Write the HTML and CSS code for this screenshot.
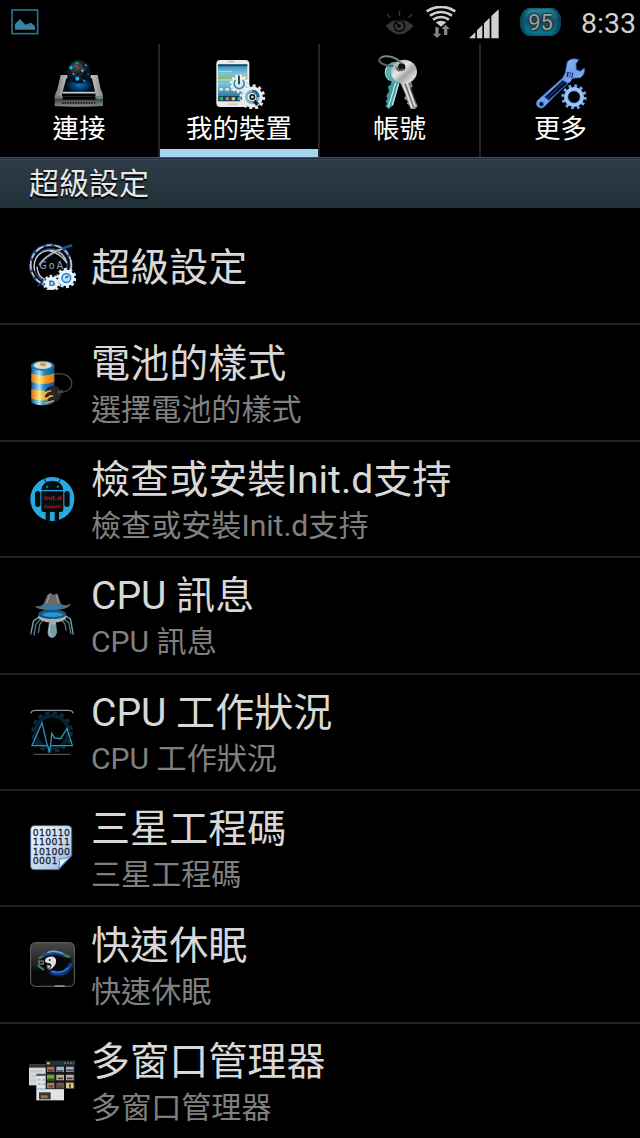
FILE: index.html
```
<!DOCTYPE html>
<html lang="zh-Hant">
<head>
  <meta charset="UTF-8" />
  <title>設定</title>
  <meta name="viewport" content="width=device-width, initial-scale=1" />
  <link rel="stylesheet" href="styles.css">
</head>
<body>
  <div class="statusbar">
    <svg class="s-pic" viewBox="0 0 84 78">
      <rect x="3" y="3" width="77" height="71" fill="none" stroke="#2b6f8a" stroke-width="5"/>
      <path d="M12 62V45L27 30L43 47L60 41L72 52V62Z" fill="#3a83a3"/>
    </svg>
    <div class="status-right">
      <svg class="s-eye" viewBox="0 0 86 72">
        <path d="M1 44Q43 8 85 44Q43 96 1 44Z" fill="#373737"/>
        <circle cx="43" cy="45" r="18" fill="#000"/><circle cx="43" cy="45" r="14" fill="#373737"/>
        <circle cx="42" cy="45" r="5" fill="#000"/><path d="M32 35L42 45" stroke="#000" stroke-width="4"/>
        <path d="M5 9L16 20M43 0V15M81 9L70 20" stroke="#373737" stroke-width="4"/>
      </svg>
      <svg class="s-wifi" viewBox="0 0 90 96">
        <g fill="none" stroke="#d0d0d0" stroke-width="8">
          <path d="M2 16Q45 -11 88 16"/><path d="M12 29Q45 7 78 29"/><path d="M21 41Q45 25 69 41"/>
        </g>
        <path d="M29 49Q45 40 61 49L45 62Z" fill="#d0d0d0"/>
        <path d="M28 64H38V83H46L33 96L20 83H28ZM54 87H64V69H72L59 56L46 69H54Z" fill="#858585"/>
      </svg>
      <svg class="s-signal" viewBox="0 0 90 90">
        <path d="M0 88L19 70V88ZM24 88V64L40 48V88ZM45 88V43L62 26V88ZM67 88V21L89 1V88Z" fill="#d0d0d0"/>
      </svg>
      <div class="battery">95</div>
      <div class="clock">8:33</div>
    </div>
  </div>

  <div class="tabs">
    <div class="tab">
      <svg viewBox="0 0 162 162">
        <defs>
          <radialGradient id="ball" cx=".4" cy=".3"><stop offset="0" stop-color="#555"/><stop offset=".65" stop-color="#161b20"/><stop offset="1" stop-color="#07141f"/></radialGradient>
          <radialGradient id="glow"><stop offset="0" stop-color="#0675cc"/><stop offset="1" stop-color="#001329"/></radialGradient>
          <linearGradient id="rail" x2="1"><stop offset="0" stop-color="#777"/><stop offset=".5" stop-color="#fff"/><stop offset="1" stop-color="#888"/></linearGradient>
          <linearGradient id="tray" x2="0" y2="1"><stop offset="0" stop-color="#999"/><stop offset=".3" stop-color="#414549"/><stop offset="1" stop-color="#8b8d8f"/></linearGradient>
        </defs>
        <path d="M45 62H118L130 112H32Z" fill="#05080c"/>
        <ellipse cx="82" cy="90" rx="38" ry="22" fill="url(#glow)"/>
        <path d="M26 60H46V70H43L32 110L29 124H8Q9 117 16 103ZM137 60H116V70H120L129 110L131 124H153Q153 115 146 103Z" fill="url(#rail)"/>
        <path d="M32 110H129V116H32Z" fill="#c5c5c5"/>
        <path d="M32 116H129V124H32Z" fill="#000"/>
        <path d="M8 124H153V153Q80 158 8 153Z" fill="url(#tray)"/>
        <path d="M32 124H130V134H32Z" fill="#030303"/>
        <path d="M30 144H130" stroke="#121212" stroke-width="5" stroke-dasharray="5 3"/>
        <circle cx="81" cy="50" r="35" fill="url(#ball)"/>
        <path d="M55 40L82 23L97 46L75 70ZM65 30L97 46L108 30M64 57L97 77" fill="none" stroke="#737b80" stroke-width="1.5" opacity=".7"/>
        <g fill="#11bff0"><circle cx="74" cy="24" r="3"/><circle cx="57" cy="38" r="5"/><circle cx="91" cy="47" r="4"/><circle cx="101" cy="31" r="3"/><circle cx="76" cy="71" r="6"/><circle cx="64" cy="57" r="3"/><circle cx="97" cy="77" r="3"/><circle cx="108" cy="57" r="2"/><circle cx="142" cy="130" r="3"/></g>
      </svg>
      <span>連接</span>
    </div>
    <div class="tab active">
      <svg viewBox="0 0 162 162">
        <defs><linearGradient id="screen" x2="0" y2="1"><stop offset="0" stop-color="#298dbb"/><stop offset=".25" stop-color="#7ac4dc"/><stop offset=".4" stop-color="#8bb76b"/><stop offset=".52" stop-color="#76c7e7"/><stop offset="1" stop-color="#155b85"/></linearGradient></defs>
        <rect x="13" y="15" width="99" height="141" rx="12" fill="#eeeae7"/>
        <rect x="18" y="28" width="88" height="111" fill="url(#screen)"/>
        <path d="M18 28H106V34H18Z" fill="#24485c"/>
        <path d="M49 20H68" stroke="#aaa" stroke-width="3"/><rect x="48" y="145" width="29" height="6" rx="3" fill="#cfcfcf"/>
        <path d="M20 75H64M20 49H60" stroke="#a8d9c5" stroke-width="4"/>
        <path d="M22 103H97" stroke="#faebbd" stroke-width="7" stroke-dasharray="11 7"/>
        <path d="M20 123H104V137H20Z" fill="#123f62"/><path d="M23 131H33" stroke="#45b344" stroke-width="9"/><path d="M41 131H51" stroke="#ed702c" stroke-width="9"/><path d="M59 131H69" stroke="#f0cb36" stroke-width="9"/><path d="M77 131H88" stroke="#51b8d9" stroke-width="9"/>
        <circle cx="98" cy="59" r="4" fill="#f7b12c"/>
        <g fill="none"><circle cx="82" cy="86" r="24" stroke="#f4f4f4" stroke-width="8" stroke-dasharray="7 5.57"/><circle cx="82" cy="86" r="16" fill="#d5e6ec" stroke="#e7eef0" stroke-width="13"/><path d="M92 75A15 15 0 1 1 71 75" stroke="#298eb2" stroke-width="5"/><path d="M81 62V88" stroke="#132e42" stroke-width="5"/></g>
        <g fill="none"><circle cx="121" cy="126" r="34" stroke="#e5e5e5" stroke-width="9" stroke-dasharray="9 8.8"/><circle cx="121" cy="126" r="23" stroke="#ececec" stroke-width="17"/><circle cx="121" cy="126" r="18" stroke="#6ebbd7" stroke-width="8"/><path d="M121 108A18 18 0 0 1 139 126" stroke="#176893" stroke-width="8"/><circle cx="121" cy="126" r="13" fill="#ece9e5"/><circle cx="121" cy="126" r="9" fill="#101a22"/><path d="M127 138L137 149" stroke="#1c2226" stroke-width="11"/><circle cx="121" cy="126" r="4" fill="#e6d7c8"/></g>
      </svg>
      <span>我的裝置</span>
    </div>
    <div class="tab">
      <svg viewBox="0 0 162 162">
        <defs><linearGradient id="steel" x2="1" y2="1"><stop offset="0" stop-color="#838383"/><stop offset=".4" stop-color="#e9e9e9"/><stop offset=".6" stop-color="#a4a4a4"/><stop offset=".8" stop-color="#dcdcdc"/><stop offset="1" stop-color="#747474"/></linearGradient></defs>
        <path d="M60 72L79 81L61 151L47 162L37 153L42 146L38 137L44 132L40 123L48 109L45 94L52 90Z" fill="#429a9c"/>
        <path d="M68 83L46 157M77 86L58 150" stroke="#bcebe5" stroke-width="4"/>
        <circle cx="67" cy="51" r="31" fill="#55aeb0"/><path d="M45 30A32 32 0 0 0 49 77" fill="none" stroke="#b0e4df" stroke-width="3"/>
        <path d="M79 78L112 75L119 94L112 101L134 154L125 163L112 161L108 150L102 146L104 138L94 131L98 121Z" fill="#9a9490"/>
        <path d="M88 81L117 158M100 79L126 154" stroke="#e1e1df" stroke-width="5"/><path d="M95 82L121 154M109 81L128 146" stroke="#56504c" stroke-width="2"/>
        <ellipse cx="93" cy="50" rx="39" ry="36" fill="url(#steel)"/>
        <circle cx="86" cy="36" r="11" fill="#151515"/>
        <path d="M91 42Q73 54 70 35M84 25C68 6 34-3 21 10C11 22 38 34 61 33" fill="none" stroke="#606264" stroke-width="6"/>
        <path d="M88 25C71 4 40-2 25 7" fill="none" stroke="#b5b8b8" stroke-width="2"/>
      </svg>
      <span>帳號</span>
    </div>
    <div class="tab">
      <svg viewBox="0 0 162 162">
        <defs><linearGradient id="blue" x2="1" y2="1"><stop offset="0" stop-color="#dbeaff"/><stop offset=".5" stop-color="#6c9df0"/><stop offset="1" stop-color="#b6d4ff"/></linearGradient></defs>
        <path d="M100 20Q113 7 134 14L126 26L127 44L139 49L151 39Q154 58 139 68L116 70L108 82L98 86L35 151Q25 164 13 157Q1 145 13 134L86 69L94 53Z" fill="url(#blue)" stroke="#3569c6" stroke-width="2"/>
        <path d="M86 75L102 85L44 137L31 126Z" fill="#05102b" stroke="#497edc" stroke-width="3"/><path d="M92 78L37 133" stroke="#3b62a8" stroke-width="2"/>
        <path d="M99 51L118 54L115 69L98 65Z" fill="#142c67"/><path d="M106 54L104 66M112 54L110 68" stroke="#b3cdfc" stroke-width="3"/>
        <circle cx="22" cy="147" r="7" fill="#020817" stroke="#4a7ee0" stroke-width="2"/>
        <g fill="none"><circle cx="120" cy="126" r="33" stroke="#79a9f4" stroke-width="10" stroke-dasharray="8 9.28"/><circle cx="120" cy="126" r="24" stroke="#9fc4fd" stroke-width="12"/><circle cx="120" cy="126" r="18" stroke="#2756b6" stroke-width="2"/></g>
      </svg>
      <span>更多</span>
    </div>
  </div>

  <div class="section">超級設定</div>

  <ul class="list">
    <li>
      <svg viewBox="0 0 144 144">
        <g fill="none">
          <circle cx="68" cy="70" r="61" stroke="#1b4b8c" stroke-width="9" stroke-dasharray="55 8 30 8"/>
          <circle cx="69" cy="70" r="61" stroke="#d0bfba" stroke-width="5" stroke-dasharray="27 9 15 8"/>
          <circle cx="68" cy="71" r="50" stroke="#22588f" stroke-width="4"/>
          <path d="M20 86C13 52 34 26 66 25Q103 23 117 64M27 74Q29 105 52 113" stroke="#d9cdc8" stroke-width="4"/>
          <path d="M34 72Q42 53 78 32Q95 21 133 10" stroke="#1d4f8f" stroke-width="8"/>
          <path d="M34 68Q45 49 78 31Q87 25 103 21M65 27Q93 31 116 62" stroke="#c9bdb9" stroke-width="4"/>
          <path d="M28 133L45 119L55 126" stroke="#16376c" stroke-width="5"/>
        </g>
        <path d="M38 76Q55 46 75 42Q98 45 108 69Z" fill="#030508"/>
        <text x="34" y="80" class="goa" textLength="71">GoA</text>
        <g fill="none"><circle cx="71" cy="124" r="22" stroke="#cce8fb" stroke-width="8" stroke-dasharray="8 5.82"/><circle cx="71" cy="124" r="14" fill="#cfeafb" stroke="#e9f4fb" stroke-width="12"/><path d="M66 132V117L76 119L79 128L69 131" stroke="#1773af" stroke-width="4"/><circle cx="115" cy="108" r="26" stroke="#c9e8ff" stroke-width="9" stroke-dasharray="9 7.33"/><circle cx="115" cy="108" r="18" fill="#bfe1f6" stroke="#eef7ff" stroke-width="13"/><circle cx="115" cy="108" r="13" stroke="#358fc7" stroke-width="5"/><path d="M112 108L121 102" stroke="#1b6da5" stroke-width="5"/></g>
      </svg>
      <div><h2>超級設定</h2></div>
    </li>
    <li>
      <svg viewBox="0 0 144 144">
        <defs>
          <linearGradient id="cellb" x2="1"><stop offset="0" stop-color="#075995"/><stop offset=".35" stop-color="#a3e0fa"/><stop offset=".55" stop-color="#278abd"/><stop offset="1" stop-color="#07519a"/></linearGradient>
          <linearGradient id="cello" x2="1"><stop offset="0" stop-color="#db7114"/><stop offset=".35" stop-color="#ffe886"/><stop offset=".6" stop-color="#f3a323"/><stop offset="1" stop-color="#dd7611"/></linearGradient>
        </defs>
        <path d="M10 18V131Q43 147 79 131V18Z" fill="url(#cellb)"/>
        <path d="M10 43Q44 57 79 43V69Q44 81 10 69ZM10 90Q44 100 79 90V119Q44 130 10 119Z" fill="url(#cello)"/>
        <ellipse cx="44" cy="20" rx="35" ry="15" fill="#1c79a9"/><ellipse cx="44" cy="19" rx="27" ry="11" fill="#dbd8cf"/><ellipse cx="45" cy="16" rx="9" ry="6" fill="#c9a551"/>
        <path d="M80 45C141 35 149 99 96 100" fill="none" stroke="#474747" stroke-width="4"/>
        <circle cx="75" cy="105" r="25" fill="#252525"/><path d="M88 101L105 96" stroke="#444" stroke-width="9"/>
        <path d="M38 105L70 95M43 121L76 110M49 133L78 125M60 96L47 111M68 109L54 123" fill="none" stroke="#e8b648" stroke-width="4"/>
      </svg>
      <div><h2>電池的樣式</h2><p>選擇電池的樣式</p></div>
    </li>
    <li>
      <svg viewBox="0 0 144 144">
        <circle cx="73" cy="72" r="66" fill="#28aae1"/>
        <g fill="#070c0f" transform="translate(2)"><path d="M38 45Q41 18 71 18T104 45ZM38 49H104V104Q104 111 97 111H91V137H78V111H64V137H51V111H45Q38 111 38 104Z"/><rect x="19" y="48" width="16" height="48" rx="8"/><rect x="107" y="48" width="16" height="48" rx="8"/></g>
        <path d="M55 23L48 10M91 23L98 10" stroke="#070c0f" stroke-width="3"/><circle cx="58" cy="35" r="3" fill="#28aae1"/><circle cx="89" cy="35" r="3" fill="#28aae1"/>
        <text x="47" y="75" class="initd" textLength="53" lengthAdjust="spacingAndGlyphs">Init.d</text><text x="47" y="100" class="support" textLength="51" lengthAdjust="spacingAndGlyphs">Support</text>
      </svg>
      <div><h2>檢查或安裝Init.d支持</h2><p>檢查或安裝Init.d支持</p></div>
    </li>
    <li>
      <svg viewBox="0 0 144 144">
        <g transform="translate(3)">
        <g fill="none" stroke="#50798a" stroke-width="4"><path d="M35 76L14 90L5 131M36 82L20 101L15 134M43 86L32 101L28 126M105 73L124 84L133 132M102 82L119 95L126 129M96 85L108 99L112 119"/></g>
        <g fill="none" stroke="#b7d5dc" stroke-width="1.5"><path d="M34 75L13 89L6 125M106 72L125 83L132 127"/></g>
        <ellipse cx="70" cy="77" rx="42" ry="18" fill="#aeb0af"/><ellipse cx="70" cy="70" rx="42" ry="15" fill="#145587"/><ellipse cx="71" cy="71" rx="31" ry="7" fill="#2299ce"/>
        <path d="M61 87Q70 81 80 87L84 124Q80 141 69 141Q54 138 56 123Z" fill="#789ca4"/><path d="M63 98L60 123Q62 134 71 135" fill="none" stroke="#b5cdd1" stroke-width="3"/><circle cx="72" cy="92" r="9" fill="#a4b0b0"/>
        <path d="M17 45Q34 49 44 38L55 12L66 5L73 12L85 7L96 39Q111 48 125 37Q123 57 70 57Q25 58 17 45Z" fill="#696969"/>
        <path d="M43 40Q71 52 98 38L99 47Q68 63 43 49Z" fill="#287eb0"/><path d="M62 10L53 38M83 12L88 37" fill="none" stroke="#aaa" stroke-width="3"/>
        </g>
      </svg>
      <div><h2>CPU 訊息</h2><p>CPU 訊息</p></div>
    </li>
    <li>
      <svg viewBox="0 0 144 144">
        <g fill="none"><circle cx="72" cy="72" r="58" stroke="#082f3e" stroke-width="9" stroke-dasharray="13 9.8"/><circle cx="72" cy="72" r="49" stroke="#06222e" stroke-width="12"/>
        <path d="M9 16Q10 7 22 7H122Q134 7 135 16" stroke="#929292" stroke-width="4"/><path d="M16 137Q18 139 24 139H120Q126 139 128 137" stroke="#636363" stroke-width="3"/>
        <path d="M56 113H12L42 44L58 114H60L64 133L68 113H133L117 61L98 92L80 90L71 76L68 113" stroke="#328fb6" stroke-width="4"/></g>
      </svg>
      <div><h2>CPU 工作狀況</h2><p>CPU 工作狀況</p></div>
    </li>
    <li>
      <svg viewBox="0 0 144 144">
        <defs><linearGradient id="paper" x2="1" y2="1"><stop offset="0" stop-color="#f4faff"/><stop offset=".6" stop-color="#c2d5ec"/><stop offset="1" stop-color="#92b4dc"/></linearGradient></defs>
        <path d="M20 5H120Q131 5 131 17V95L92 137H20Q8 137 8 125V17Q8 5 20 5Z" fill="url(#paper)" stroke="#496b9c" stroke-width="3"/>
        <path d="M90 136Q98 119 93 105Q111 108 130 94Z" fill="#e7f1fd" stroke="#5888c0" stroke-width="3"/>
        <g class="bits"><text x="14" y="35" textLength="112">010110</text><text x="14" y="64" textLength="112">110011</text><text x="14" y="93" textLength="112">101000</text><text x="14" y="121" textLength="74">0001</text></g>
      </svg>
      <div><h2>三星工程碼</h2><p>三星工程碼</p></div>
    </li>
    <li>
      <svg viewBox="0 0 144 144">
        <defs>
          <linearGradient id="glass" x2="0" y2="1"><stop offset="0" stop-color="#484848"/><stop offset=".5" stop-color="#202020"/><stop offset=".65" stop-color="#080808"/><stop offset="1" stop-color="#080808"/></linearGradient>
          <filter id="soft"><feGaussianBlur stdDeviation="3"/></filter>
        </defs>
        <rect x="8" y="5" width="131" height="131" rx="14" fill="url(#glass)" stroke="#686868" stroke-width="3"/>
        <path d="M30 66Q62 22 124 45Q142 74 108 101Q57 96 30 66Z" fill="#050608"/>
        <g fill="none" filter="url(#soft)"><path d="M42 44Q76 26 121 47" stroke="#2459ae" stroke-width="8"/><path d="M66 91Q112 116 129 66" stroke="#0e55c9" stroke-width="9"/></g>
        <g fill="none"><path d="M58 35Q83 25 107 39" stroke="#75a6d8" stroke-width="4"/><path d="M71 91Q103 99 120 80" stroke="#3c90e6" stroke-width="4"/><path d="M44 45L33 52M29 73L48 87M107 42L126 48" stroke="#239650" stroke-width="6"/></g>
        <path d="M59 49C88 36 96 72 63 87C76 73 70 67 60 66C48 65 48 54 59 49Z" fill="#dedede"/>
        <path d="M57 69Q52 83 63 87L70 75Z" fill="#666"/><circle cx="65" cy="57" r="3" fill="#222"/><circle cx="62" cy="77" r="3" fill="#ddd"/>
        <rect x="33" y="60" width="13" height="9" fill="#111" stroke="#999" stroke-width="3"/><path d="M80 135H110" stroke="#ccc" stroke-width="3"/>
      </svg>
      <div><h2>快速休眠</h2><p>快速休眠</p></div>
    </li>
    <li>
      <svg viewBox="0 0 144 144">
        <path d="M3 23H59V85H3Z" fill="#d4d7db"/><path d="M3 23H59V32H3Z" fill="#36332f"/><path d="M8 43H44M8 57H41M8 70H37" stroke="#b9c1c9" stroke-width="5" stroke-dasharray="9 3"/>
        <path d="M25 50H108V130H25Z" fill="#e1e3e6"/><path d="M25 50H53V57H25Z" fill="#5b5d5c"/><path d="M29 68H53M29 81H53" stroke="#b0bbc6" stroke-width="6" stroke-dasharray="9 5"/><path d="M28 96H106" stroke="#8cc2ce" stroke-width="4"/><path d="M33 106H68V127H33Z" fill="#39372f"/><path d="M39 119H59" stroke="#99734e" stroke-width="8"/>
        <path d="M53 11H141V96H53Z" fill="#15191b"/><path d="M53 11H141V25H53Z" fill="#273138"/><path d="M57 19H65" stroke="#ccd23a" stroke-width="6"/><path d="M108 18H137" stroke="#78848b" stroke-width="4" stroke-dasharray="5 4"/>
        <path d="M57 29H79V45H57Z" fill="#c45c58"/><path d="M85 29H108V45H85Z" fill="#9cb4d1"/><path d="M114 29H137V45H114Z" fill="#9bb0cc"/><path d="M57 53H79V70H57Z" fill="#65a834"/><path d="M85 53H108V70H85ZM114 53H137V70H114Z" fill="#c9aa9c"/><path d="M57 77H79V94H57Z" fill="#bd7454"/><path d="M85 77H108V94H85Z" fill="#77544d"/><path d="M114 77H137V94H114Z" fill="#e2c17d"/>
        <path d="M60 41H76M87 42H106M115 40H136M58 67H78M90 64H105M117 64H134M62 88H75M88 90H105M126 80V92" fill="none" stroke="#46403a" stroke-width="5"/>
      </svg>
      <div><h2>多窗口管理器</h2><p>多窗口管理器</p></div>
    </li>
  </ul>
</body>
</html>
```
FILE: styles.css
```
* { box-sizing: border-box; }
body {
  margin: 0;
  width: 640px;
  height: 1138px;
  overflow: hidden;
  background: #000;
  color: #fff;
  font-family: Roboto, "Noto Sans CJK TC", sans-serif;
}
svg { display: block; flex: none; }

.statusbar {
  height: 44px;
  display: flex;
  justify-content: space-between;
  align-items: flex-start;
  padding: 6px 4px 0 11px;
}
.s-pic { width: 28px; height: 26px; margin-top: 3px; }
.status-right { display: flex; align-items: flex-start; }
.s-eye { width: 29px; height: 24px; margin: 5px 12px 0 0; }
.s-wifi { width: 30px; height: 32px; margin-right: 13px; }
.s-signal { width: 30px; height: 30px; margin: 3px 21px 0 0; }
.battery {
  width: 41px;
  height: 28px;
  margin: 2px 20px 0 0;
  border-radius: 10px / 14px;
  background: linear-gradient(#2e91a8, #12586e 45%, #087c9c);
  box-shadow: inset 3px 0 3px #07465a, inset -3px 0 3px #07465a;
  color: #9a9fa1;
  font-size: 22px;
  font-weight: 400;
  line-height: 29px;
  text-align: center;
  text-shadow: 0 0 2px #222, 0 0 2px #222, 0 0 3px #222;
}
.clock {
  width: 55px;
  font-size: 28.5px;
  line-height: 35px;
  color: #d0d0d0;
  white-space: nowrap;
}

.tabs {
  height: 113px;
  display: grid;
  grid-template-columns: 160px 160px 161px 159px;
}
.tab {
  display: flex;
  flex-direction: column;
  align-items: center;
  padding-top: 11px;
  border-right: 2px solid #242424;
}
.tab:last-child { border-right: none; }
.tab svg { width: 54px; height: 54px; }
.tab span {
  margin-top: 2px;
  font-size: 26.5px;
  line-height: 36px;
}
.active { box-shadow: inset 0 -8px #a6d3ef; }

.section {
  height: 51px;
  padding-left: 29px;
  border-top: 1px solid #47535e;
  background: linear-gradient(#2e3b47, #21323a);
  box-shadow: inset 0 1px #1c2b3b, inset 0 2px #3b4853;
  color: #e8e8e8;
  font-size: 30px;
  line-height: 52px;
  text-shadow: 0 2px 1px #000;
}

.list {
  margin: 0;
  padding: 1px 0 0;
  list-style: none;
}
.list li {
  height: 116.4px;
  display: flex;
  align-items: center;
  padding-left: 28px;
  border-bottom: 2px solid #222;
}
.list li:last-child { border-bottom-color: #000; }
.list svg { width: 48px; height: 48px; margin-right: 15px; }
.list li div { padding-top: 4px; }
h2, p {
  margin: 0;
  font-weight: 400;
  white-space: nowrap;
}
h2 {
  font-size: 39.1px;
  line-height: 50px;
  color: #d8d8d8;
}
p {
  font-size: 30.1px;
  line-height: 42px;
  color: #808080;
}

.goa { font: 29px "DejaVu Sans", sans-serif; fill: #92a4b8; }
.initd { font: bold 18px "DejaVu Sans", sans-serif; fill: #c90d16; }
.support { font: italic bold 13px "DejaVu Sans", sans-serif; fill: #c20d16; }
.bits { font: 28px "DejaVu Sans", sans-serif; fill: #17243a; stroke: #17243a; stroke-width: .8px; }
```
